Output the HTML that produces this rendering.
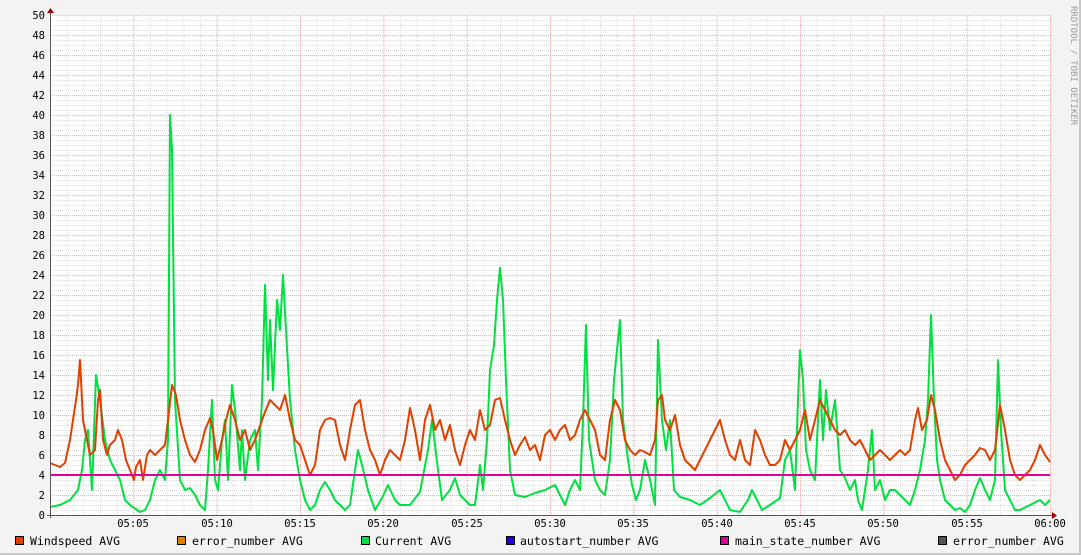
<!DOCTYPE html>
<html><head><meta charset="utf-8"><style>
html,body{margin:0;padding:0;background:#f3f3f3}
svg{display:block}
text{font-family:"DejaVu Sans Mono","Liberation Mono",monospace;font-size:10.5px;fill:#000}
.lg{font-size:11.5px}
</style></head><body>
<svg width="1081" height="555" viewBox="0 0 1081 555" xmlns="http://www.w3.org/2000/svg">
<defs>
<pattern id="minh" x="0" y="15" width="1000" height="5" patternUnits="userSpaceOnUse"><line x1="0" y1="0.5" x2="1000" y2="0.5" stroke="#ddd" stroke-dasharray="1,1"/></pattern>
<pattern id="minv" x="50" y="0" width="16.667" height="500" patternUnits="userSpaceOnUse"><line x1="0.5" y1="0" x2="0.5" y2="500" stroke="#ddd" stroke-dasharray="1,1"/></pattern>
<pattern id="majh" x="0" y="15" width="1000" height="20" patternUnits="userSpaceOnUse"><line x1="0" y1="0.5" x2="1000" y2="0.5" stroke="#e8b0b0" stroke-dasharray="1,1"/></pattern>
<pattern id="majv" x="50" y="0" width="83.333" height="500" patternUnits="userSpaceOnUse"><line x1="0.5" y1="0" x2="0.5" y2="500" stroke="#e8b0b0" stroke-dasharray="1,1"/></pattern>
</defs>
<rect x="0" y="0" width="1081" height="555" fill="#f3f3f3"/>
<rect x="1079" y="0" width="2" height="555" fill="#c8c8c8"/>
<rect x="0" y="553" width="1081" height="2" fill="#c8c8c8"/>
<rect x="50" y="15" width="1000" height="500" fill="#fff"/>
<rect x="50" y="15" width="1000" height="500" fill="url(#minh)"/>
<rect x="50" y="15" width="1000" height="500" fill="url(#minv)"/>
<rect x="50" y="15" width="1001" height="500" fill="url(#majh)"/>
<rect x="50" y="15" width="1001" height="500" fill="url(#majv)"/>
<g text-anchor="end">
<text x="45" y="19">50</text><text x="45" y="39">48</text><text x="45" y="59">46</text><text x="45" y="79">44</text><text x="45" y="99">42</text><text x="45" y="119">40</text><text x="45" y="139">38</text><text x="45" y="159">36</text><text x="45" y="179">34</text><text x="45" y="199">32</text><text x="45" y="219">30</text><text x="45" y="239">28</text><text x="45" y="259">26</text><text x="45" y="279">24</text><text x="45" y="299">22</text><text x="45" y="319">20</text><text x="45" y="339">18</text><text x="45" y="359">16</text><text x="45" y="379">14</text><text x="45" y="399">12</text><text x="45" y="419">10</text><text x="45" y="439">8</text><text x="45" y="459">6</text><text x="45" y="479">4</text><text x="45" y="499">2</text><text x="45" y="519">0</text>
</g>
<g text-anchor="middle">
<text x="133" y="527">05:05</text><text x="217" y="527">05:10</text><text x="300" y="527">05:15</text><text x="383" y="527">05:20</text><text x="467" y="527">05:25</text><text x="550" y="527">05:30</text><text x="633" y="527">05:35</text><text x="717" y="527">05:40</text><text x="800" y="527">05:45</text><text x="883" y="527">05:50</text><text x="967" y="527">05:55</text><text x="1050" y="527">06:00</text>
</g>
<polyline fill="none" stroke="#00e040" stroke-width="2" stroke-linejoin="round" points="50,507 60,505 70,500 78,490 82,470 85,440 88,430 92,490 96,375 100,400 105,440 110,460 115,470 120,480 125,500 130,505 140,512 145,510 150,500 155,480 160,470 165,480 168,440 170,115 172,150 175,400 180,480 185,490 190,488 195,495 200,505 205,510 208,470 212,400 215,480 218,490 222,440 225,420 228,480 232,385 235,410 240,470 242,430 245,480 250,440 255,430 258,470 262,400 265,285 268,380 270,320 273,390 277,300 280,330 283,275 286,330 290,400 295,450 300,480 305,500 310,510 315,505 320,490 325,482 330,490 335,500 340,505 345,510 350,505 355,470 358,450 362,465 368,490 375,510 382,498 388,485 395,500 400,505 410,505 420,492 428,450 432,420 438,470 442,500 450,490 455,478 460,495 465,500 470,505 475,505 480,465 483,490 487,440 490,370 494,345 497,300 500,268 503,300 506,380 510,470 515,495 525,497 535,493 545,490 555,485 560,495 565,505 570,490 575,480 580,490 583,420 586,325 589,440 595,480 600,490 605,495 610,460 614,380 620,320 623,420 628,460 632,485 636,500 640,490 645,460 650,480 655,505 658,340 662,420 666,450 670,420 674,490 680,497 690,500 700,505 710,498 720,490 730,510 740,512 748,500 752,490 757,500 762,510 770,505 780,498 785,460 790,450 795,490 798,400 800,350 803,380 806,450 810,470 815,480 820,380 823,440 826,390 830,430 835,400 840,470 845,478 850,490 855,480 858,500 862,510 868,470 872,430 875,490 880,480 885,500 890,490 895,490 900,495 905,500 910,505 915,490 920,470 925,440 928,400 931,315 934,400 937,460 940,480 945,500 950,505 955,510 960,508 965,512 970,505 975,490 980,478 985,490 990,500 995,480 998,360 1001,430 1005,490 1010,500 1015,510 1020,510 1030,505 1040,500 1045,505 1050,500"/>
<polyline fill="none" stroke="#e04000" stroke-width="2" stroke-linejoin="round" points="50,463 55,465 60,467 65,463 70,440 73,420 76,400 78,385 80,360 83,420 87,440 90,455 95,450 98,400 100,390 103,440 107,455 110,445 115,440 118,430 122,440 126,460 130,470 134,480 136,467 140,460 143,480 147,455 150,450 155,455 160,450 165,445 168,420 172,385 176,395 180,420 185,440 190,455 195,462 200,450 205,430 210,418 213,430 217,460 222,440 226,420 230,405 235,420 240,440 245,430 250,450 255,440 262,420 265,412 270,400 275,405 280,410 285,395 290,420 295,440 300,445 305,460 310,475 315,465 320,430 325,420 330,418 335,420 340,445 345,460 350,430 355,405 360,400 365,430 370,450 375,460 380,475 385,460 390,450 395,455 400,460 405,440 410,408 415,430 420,460 425,420 430,405 435,430 440,420 445,440 450,425 455,450 460,465 465,445 470,430 475,440 480,410 485,430 490,425 495,400 500,398 505,420 510,440 515,455 520,445 525,437 530,450 535,445 540,460 545,435 550,430 555,440 560,430 565,425 570,440 575,435 580,420 585,410 590,420 595,430 600,455 605,460 610,420 615,400 620,410 625,440 630,450 635,455 640,450 645,452 650,455 655,440 658,400 662,395 665,420 670,430 675,415 680,445 685,460 690,465 695,470 700,460 705,450 710,440 715,430 720,420 725,440 730,455 735,460 740,440 745,460 750,465 755,430 760,440 765,455 770,465 775,465 780,460 785,440 790,450 795,440 800,430 805,410 810,440 815,420 820,400 825,410 830,420 835,430 840,435 845,430 850,440 855,445 860,440 865,450 870,460 875,455 880,450 885,455 890,460 895,455 900,450 905,455 910,450 915,420 918,408 922,430 927,420 931,395 935,410 940,440 945,460 950,470 955,480 960,475 965,465 970,460 975,455 980,448 985,450 990,460 995,450 1000,405 1005,430 1010,460 1015,475 1020,480 1025,475 1030,470 1035,460 1040,445 1045,455 1050,462"/>
<line x1="50" y1="475" x2="1050" y2="475" stroke="#e000a0" stroke-width="2"/>
<line x1="50.5" y1="11" x2="50.5" y2="518" stroke="#555"/>
<line x1="47" y1="515.5" x2="1054" y2="515.5" stroke="#555"/>
<polygon points="47,13 54,13 50.5,8" fill="#a00000"/>
<polygon points="1052,512 1052,519 1057,515.5" fill="#a00000"/>
<text x="1071" y="6" transform="rotate(90 1071 6)" style="font-size:9px;fill:#999">RRDTOOL / TOBI OETIKER</text>
<g stroke="#000" stroke-width="1">
<rect x="15.5" y="536.5" width="8" height="8" fill="#e04000"/>
<rect x="177.5" y="536.5" width="8" height="8" fill="#e08000"/>
<rect x="361.5" y="536.5" width="8" height="8" fill="#00e040"/>
<rect x="506.5" y="536.5" width="8" height="8" fill="#2000e0"/>
<rect x="720.5" y="536.5" width="8" height="8" fill="#e000a0"/>
<rect x="938.5" y="536.5" width="8" height="8" fill="#555"/>
</g>
<g class="lg">
<text class="lg" x="30" y="545">Windspeed AVG</text>
<text class="lg" x="192" y="545">error_number AVG</text>
<text class="lg" x="375" y="545">Current AVG</text>
<text class="lg" x="520" y="545">autostart_number AVG</text>
<text class="lg" x="735" y="545">main_state_number AVG</text>
<text class="lg" x="953" y="545">error_number AVG</text>
</g>
</svg>
</body></html>
